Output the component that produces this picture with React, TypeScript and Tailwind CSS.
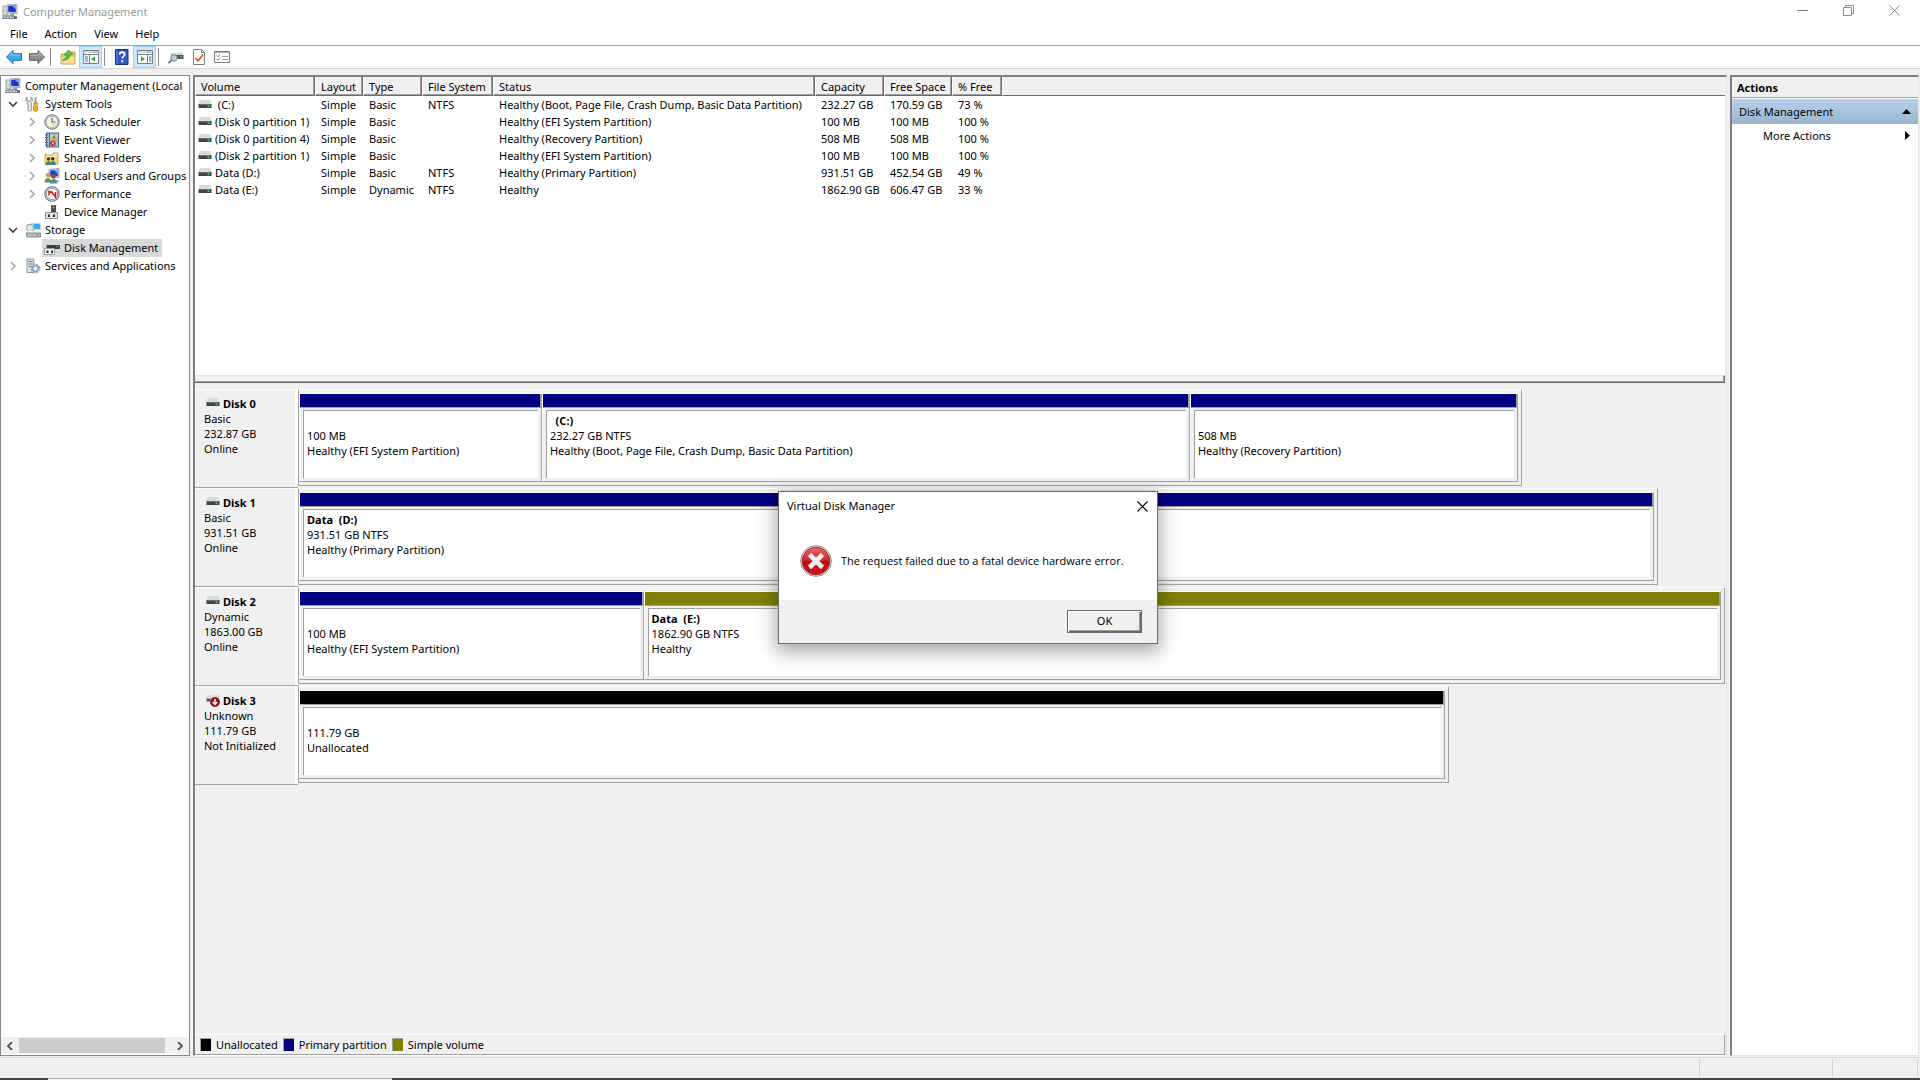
import type { ReactNode } from "react";

/* ---------- icons ---------- */

function Svg({ w = 16, h = 16, children }: { w?: number; h?: number; children: ReactNode }) {
  return (
    <svg width={w} height={h} viewBox={`0 0 ${w} ${h}`} className="shrink-0" aria-hidden="true">
      {children}
    </svg>
  );
}

const ComputerIcon = () => (
  <Svg>
    <rect x="1" y="2" width="5" height="9" fill="#d5dbe0" stroke="#8b969e" strokeWidth="0.8" />
    <path d="M5 .8 15 0v9.6L5 9z" fill="#c9d1da" stroke="#8d98a5" strokeWidth="0.7" />
    <path d="M6.2 2 13.8 1.3v7L6.2 7.8z" fill="#1f34c4" />
    <path d="M10 1.7l3.8-.4v4z" fill="#8fa9f2" />
    <path d="M8 9.5h4v2H8z" fill="#8b969e" />
    <path d="M1 11h11l3 4H0z" fill="#7f8c8f" />
    <path d="M2 12h9M1.5 13.5h11" stroke="#d4dcdc" strokeDasharray="2 1" />
    <path d="M12 12.500h3v2h-3z" fill="#4b5a60" />
  </Svg>
);

const ToolsIcon = () => (
  <Svg>
    <path d="M2 1v3l2 1.500L6 4V1c2 1 2.300 4 .3 5.500V14c0 1.500-3.300 1.500-3.300 0V6.500C.2 5 .3 2 2 1z" fill="#eceeef" stroke="#808488" strokeWidth="0.9" />
    <path d="M9.500 1h2v6h-2z" fill="#9a9da0" />
    <path d="M8.500 7h4v1.500l-.7 1 .7 1V14c0 1.800-4 1.800-4 0v-3.500l.7-1-.7-1z" fill="#f3b51e" stroke="#b87c0c" strokeWidth="0.7" />
  </Svg>
);

const ClockIcon = () => (
  <Svg>
    <circle cx="8" cy="8" r="7.300" fill="#c3c6c8" stroke="#74787b" strokeWidth="0.9" />
    <circle cx="8" cy="8" r="5.700" fill="#f8f5e6" stroke="#a7a9aa" strokeWidth="0.6" />
    <path d="M8 8h4.500A4.500 4.500 0 0 1 8 12.500z" fill="#f0dfa6" />
    <path d="M8 3.500V8h3.500" fill="none" stroke="#3a6ea8" strokeWidth="1.200" />
  </Svg>
);

const EventIcon = () => (
  <Svg>
    <rect x="2.500" y="1" width="12" height="14" fill="#a9c4e2" stroke="#44628c" />
    <path d="M5.500 1v14" stroke="#44628c" />
    <path d="M1 3h3M1 5.500h3M1 8h3M1 10.500h3M1 13h3" stroke="#55606e" />
    <path d="M6.500 4h7M6.500 7h7" stroke="#e8f0f9" />
    <path d="M10 2.500 13 8H7z" fill="#f8d422" stroke="#a88607" strokeWidth="0.6" />
    <path d="M10 4.500v2" stroke="#000" strokeWidth="0.9" />
    <circle cx="9" cy="11.300" r="2.900" fill="#d82a2a" />
    <path d="m7.900 10.200 2.200 2.200m0-2.200-2.200 2.200" stroke="#fff" strokeWidth="0.8" />
  </Svg>
);

const SharedIcon = () => (
  <Svg>
    <path d="M1 4 1 14h13V3H9.500L8 5H4L3 4z" fill="#f4d675" stroke="#c79a31" strokeWidth="0.8" />
    <path d="M9.500 4.500H13" stroke="#fff" />
    <path d="M3 6.500h10" stroke="#fdf0b8" />
    <circle cx="4.500" cy="9" r="1.700" fill="#4a3524" />
    <path d="M1.500 15c0-5 6-5 6 0z" fill="#4a8f42" />
    <circle cx="8.700" cy="8.700" r="1.700" fill="#3a2a20" />
    <path d="M6 15c0-5.500 6-5.500 6 0z" fill="#3d87a5" />
  </Svg>
);

const UsersIcon = () => (
  <Svg>
    <path d="M5 1.500 15 .5v9L5 9z" fill="#d6dce2" stroke="#8692a0" strokeWidth="0.8" />
    <path d="M6.200 2.600 13.800 1.800v6.500l-7.600-.4z" fill="#2440cf" />
    <path d="m10 2.200 3.800-.4v4z" fill="#92aaf3" />
    <circle cx="4" cy="7" r="2.300" fill="#c79b62" />
    <path d="M.5 14.500c0-6 7-6 7 0z" fill="#5b9a52" />
    <circle cx="9.500" cy="8.500" r="2.300" fill="#8f5a2c" />
    <path d="M6 15.500c0-6 7.500-6 7.500 0z" fill="#5689bd" />
    <path d="M12 13h3" stroke="#777" />
  </Svg>
);

const PerformanceIcon = () => (
  <Svg>
    <circle cx="8" cy="8" r="7.200" fill="#ececec" stroke="#6c6f72" strokeWidth="1.100" />
    <circle cx="8" cy="8" r="5.600" fill="#fff" stroke="#8d8f91" strokeWidth="0.9" />
    <path d="M5 9.500V5.500l2.500 1M7 5l4.500 6V6" fill="none" stroke="#d4141c" strokeWidth="1.500" />
  </Svg>
);

const DeviceIcon = () => (
  <Svg>
    <path d="m6 2 2-1h5l-1 1z" fill="#8a8f92" />
    <path d="M7 1.500h5v8H7z" fill="#4d5255" />
    <path d="M8.500 3.500h1.500" stroke="#54e06a" />
    <path d="M1.500 8.500h12v6h-12z" fill="#e4e5e6" stroke="#8d9092" />
    <path d="M4 10.500h2v2.500H4zM9 10.500h2v2.500H9z" fill="#2d2f31" />
  </Svg>
);

const StorageIcon = () => (
  <Svg>
    <path d="M2 3 9 1.500V9L2 8z" fill="#c7d9c6" stroke="#7e8f83" strokeWidth="0.8" />
    <circle cx="5" cy="6" r="3.500" fill="#dfe8ec" stroke="#93a1a9" strokeWidth="0.7" />
    <path d="M8 1.500h7.500v6H8z" fill="#37aede" stroke="#ccd5da" />
    <path d="m2 9 12-.5 1.500 2.500H1z" fill="#f1f2f2" />
    <path d="M1 11h14.500v4H2z" fill="#b9bdc0" stroke="#73787b" strokeWidth="0.8" />
    <path d="M11.500 13h2" stroke="#35b43f" strokeWidth="1.300" />
  </Svg>
);

const DiskMgmtIcon = () => (
  <Svg>
    <path d="M4 3.500h11l1 1.500H2.500z" fill="#d7d9da" />
    <path d="M2.500 5h13.500v4H2.500z" fill="#3c4144" />
    <path d="M12.500 6.500h2" stroke="#44d35b" />
    <path d="M.5 8.500h10v6H.5z" fill="#eff0f0" stroke="#9a9c9e" />
    <path d="M2.500 10.500h2V13h-2zM7 10.500h2V13H7z" fill="#303234" />
  </Svg>
);

const ServicesIcon = () => (
  <Svg>
    <path d="M2 1h7v13.500H2z" fill="#dbe1e5" stroke="#8b979f" />
    <path d="M3.500 3.500h4M3.500 6h4M3.500 8.500h4" stroke="#6d7f8c" />
    <circle cx="10.500" cy="10.500" r="3.600" fill="none" stroke="#8eaac2" strokeWidth="2.600" strokeDasharray="2 .8" />
    <circle cx="10.500" cy="10.500" r="3" fill="#c3d6e6" stroke="#7896b0" />
    <circle cx="10.500" cy="10.500" r="1.200" fill="#fff" />
  </Svg>
);

const DriveIcon = () => (
  <Svg w={14} h={9}>
    <path d="M1.500 0h11l1 4H.5z" fill="#d8dadc" />
    <path d="M.5 4h13v4H.5z" fill="#3f4447" />
    <path d="M.5 4h13v1H.5z" fill="#6c7174" />
    <path d="M9.500 6.200h2" stroke="#35e04c" strokeWidth="1.600" />
  </Svg>
);

const OfflineDriveIcon = () => (
  <Svg w={14} h={12}>
    <path d="M1 0h12v4H0z" fill="#dcdee0" />
    <path d="M.5 3.500h4v3h-4z" fill="#55595c" />
    <circle cx="9" cy="7" r="4.800" fill="#a3131b" />
    <circle cx="9" cy="7" r="4.200" fill="none" stroke="#7b0b11" strokeWidth="0.8" />
    <path d="M9 4v4.500M6.800 7 9 9.500 11.200 7" fill="none" stroke="#fff" strokeWidth="1.400" />
  </Svg>
);

const Arrow = ({ fill, stroke, flip }: { fill: string; stroke: string; flip?: boolean }) => (
  <Svg>
    <path
      d={flip ? "M15.500 8 9 1.500v3.200H.5v6.600H9v3.200z" : "M.5 8 7 1.500v3.200h8.500v6.600H7v3.200z"}
      fill={fill}
      stroke={stroke}
      strokeLinejoin="round"
    />
    <path d={flip ? "M1.500 6.200h8.500V4.200l3 3" : "M14.500 6.200H6V4.200l-3 3"} fill="none" stroke="#fff" strokeOpacity="0.45" />
  </Svg>
);

const UpFolderIcon = () => (
  <Svg>
    <path d="M1 5h6l1-2h7v12H1z" fill="#e9c867" stroke="#c09a3e" strokeWidth="0.9" />
    <path d="M1.500 8h13v6.500h-13z" fill="#f7de90" />
    <path d="M2 11c3-.5 4.500-2.500 4.500-5H4L8.500 1 13 5.500h-2.700C10 9.500 7 11.800 2 11z" fill="#5cbf48" stroke="#2f8a22" strokeWidth="0.6" />
  </Svg>
);

const PaneIcon = ({ right }: { right?: boolean }) => (
  <Svg>
    <path d="M.5 1.500h15v13H.5z" fill="#fff" stroke="#7b7f83" />
    <path d="M1 3h14" stroke="#b4b8bc" />
    <path d="M10.500 3h4" stroke="#6b6f73" strokeDasharray="1 1" />
    <path d="M.5 5.500h15" stroke="#7b7f83" />
    {right ? (
      <>
        <path d="M10.500 6v8" stroke="#7b7f83" />
        <path d="M12 8h2.500M12 10h2.500M12 12h2.500" stroke="#3a72b8" />
        <path d="m4 7.500 4 2.500-4 2.500z" fill="#32a32b" />
      </>
    ) : (
      <>
        <path d="M6.500 6v8" stroke="#7b7f83" />
        <path d="M2 8h3M2 10h3M2 12h3" stroke="#3a72b8" />
        <path d="m12 7.500-4 2.500 4 2.500z" fill="#32a32b" />
      </>
    )}
  </Svg>
);

const HelpIcon = () => (
  <Svg>
    <path d="M1.500.5H14v15H1.500z" fill="#3456c0" stroke="#1d3284" />
    <path d="M3 1v14" stroke="#6f8be0" />
    <path d="M5.700 5.500c0-3 5-3 5 0 0 2-2.400 1.800-2.400 4M8.300 11.300v1.900" fill="none" stroke="#fff" strokeWidth="1.800" />
  </Svg>
);

const RescanIcon = () => (
  <Svg>
    <path d="M3 4h11.500l1 2H2z" fill="#cfd3d6" />
    <path d="M3 6h12.500v4H3z" fill="#4b5154" />
    <path d="M12 8h2" stroke="#3ddb54" strokeWidth="1.300" />
    <circle cx="6" cy="9" r="3.200" fill="#b9d4e8" stroke="#77858f" />
    <path d="m3.700 11-3.200 3" stroke="#707a82" strokeWidth="1.800" />
  </Svg>
);

const CheckDocIcon = () => (
  <Svg>
    <path d="M2.500.5h8l3 3v12h-11z" fill="#fff" stroke="#7c7f82" />
    <path d="M10.500.5v3h3" fill="none" stroke="#7c7f82" />
    <path d="m4.500 9 2.500 3 5-6.500" fill="none" stroke="#e2501e" strokeWidth="1.700" />
  </Svg>
);

const ListIcon = () => (
  <Svg>
    <path d="M.5 2.500h15v11H.5z" fill="#fff" stroke="#7c7f82" />
    <path d="M1 3.500h14" stroke="#a8acb0" />
    <path d="m2.500 6.500 1.200 1.200L6 5.500M2.500 10l1.200 1.200L6 9" fill="none" stroke="#3f8fd0" />
    <path d="M8 7.500h6M8 10.500h6" stroke="#9fa3a6" />
  </Svg>
);

const ErrorIcon = () => (
  <Svg w={32} h={32}>
    <defs>
      <linearGradient id="err" x1="0" y1="0" x2="0" y2="1">
        <stop offset="0" stopColor="#e8696c" />
        <stop offset="0.5" stopColor="#cf2227" />
        <stop offset="0.52" stopColor="#b90d12" />
        <stop offset="1" stopColor="#cc1a1a" />
      </linearGradient>
    </defs>
    <circle cx="16" cy="16" r="15.400" fill="#fff" stroke="#8d8d8d" strokeWidth="1" />
    <circle cx="16" cy="16" r="13.900" fill="url(#err)" stroke="#8c1a1d" strokeWidth="0.8" />
    <path d="m9.500 9.500 13 13m0-13-13 13" stroke="#f1efef" strokeWidth="4.600" />
  </Svg>
);

const Chevron = ({ open }: { open?: boolean }) => (
  <Svg w={10} h={10}>
    {open ? (
      <path d="m1 3 4 4 4-4" fill="none" stroke="#404040" strokeWidth="1.600" />
    ) : (
      <path d="m3 1 4 4-4 4" fill="none" stroke="#a6a6a6" strokeWidth="1.600" />
    )}
  </Svg>
);

/* ---------- data ---------- */

type Node = { label: string; icon: ReactNode; level: 0 | 1 | 2; open?: boolean; leaf?: boolean; selected?: boolean };

const tree: Node[] = [
  { label: "Computer Management (Local", icon: <ComputerIcon />, level: 0, leaf: true },
  { label: "System Tools", icon: <ToolsIcon />, level: 1, open: true },
  { label: "Task Scheduler", icon: <ClockIcon />, level: 2 },
  { label: "Event Viewer", icon: <EventIcon />, level: 2 },
  { label: "Shared Folders", icon: <SharedIcon />, level: 2 },
  { label: "Local Users and Groups", icon: <UsersIcon />, level: 2 },
  { label: "Performance", icon: <PerformanceIcon />, level: 2 },
  { label: "Device Manager", icon: <DeviceIcon />, level: 2, leaf: true },
  { label: "Storage", icon: <StorageIcon />, level: 1, open: true },
  { label: "Disk Management", icon: <DiskMgmtIcon />, level: 2, leaf: true, selected: true },
  { label: "Services and Applications", icon: <ServicesIcon />, level: 1 },
];

const columns = ["Volume", "Layout", "Type", "File System", "Status", "Capacity", "Free Space", "% Free"];

const volumes = [
  ["\u00a0(C:)", "Simple", "Basic", "NTFS", "Healthy (Boot, Page File, Crash Dump, Basic Data Partition)", "232.27 GB", "170.59 GB", "73 %"],
  ["(Disk 0 partition 1)", "Simple", "Basic", "", "Healthy (EFI System Partition)", "100 MB", "100 MB", "100 %"],
  ["(Disk 0 partition 4)", "Simple", "Basic", "", "Healthy (Recovery Partition)", "508 MB", "508 MB", "100 %"],
  ["(Disk 2 partition 1)", "Simple", "Basic", "", "Healthy (EFI System Partition)", "100 MB", "100 MB", "100 %"],
  ["Data (D:)", "Simple", "Basic", "NTFS", "Healthy (Primary Partition)", "931.51 GB", "452.54 GB", "49 %"],
  ["Data (E:)", "Simple", "Dynamic", "NTFS", "Healthy", "1862.90 GB", "606.47 GB", "33 %"],
];

type Part = { share: number; kind: "primary" | "simple" | "free"; name: string; size: string; state: string };
type Disk = { name: string; type: string; size: string; state: string; share: number; offline?: boolean; parts: Part[] };

const disks: Disk[] = [
  {
    name: "Disk 0", type: "Basic", size: "232.87 GB", state: "Online", share: 85.8,
    parts: [
      { share: 242, kind: "primary", name: "", size: "100 MB", state: "Healthy (EFI System Partition)" },
      { share: 649, kind: "primary", name: "\u00a0\u00a0(C:)", size: "232.27 GB NTFS", state: "Healthy (Boot, Page File, Crash Dump, Basic Data Partition)" },
      { share: 328, kind: "primary", name: "", size: "508 MB", state: "Healthy (Recovery Partition)" },
    ],
  },
  {
    name: "Disk 1", type: "Basic", size: "931.51 GB", state: "Online", share: 95.3,
    parts: [{ share: 1, kind: "primary", name: "Data\u00a0\u00a0(D:)", size: "931.51 GB NTFS", state: "Healthy (Primary Partition)" }],
  },
  {
    name: "Disk 2", type: "Dynamic", size: "1863.00 GB", state: "Online", share: 100,
    parts: [
      { share: 344, kind: "primary", name: "", size: "100 MB", state: "Healthy (EFI System Partition)" },
      { share: 1080, kind: "simple", name: "Data\u00a0\u00a0(E:)", size: "1862.90 GB NTFS", state: "Healthy" },
    ],
  },
  {
    name: "Disk 3", type: "Unknown", size: "111.79 GB", state: "Not Initialized", share: 80.66, offline: true,
    parts: [{ share: 1, kind: "free", name: "", size: "111.79 GB", state: "Unallocated" }],
  },
];

const fills = { primary: "bg-[#000080]", simple: "bg-[#808000]", free: "bg-black" };
const indents = ["pl-[2px]", "pl-[3px]", "pl-[22px]"];

/* ---------- parts ---------- */

function ToolButton({ label, on, children }: { label: string; on?: boolean; children: ReactNode }) {
  return (
    <button
      type="button"
      aria-label={label}
      className={`flex h-[22px] w-[23px] items-center justify-center border ${on ? "border-[#99d1ff] bg-[#cce8ff]" : "border-transparent"}`}
    >
      {children}
    </button>
  );
}

const Divider = () => <span className="ml-[2px] mr-[5px] h-[18px] w-px bg-[#8a8a8a]" />;

function TreeRow({ node }: { node: Node }) {
  return (
    <li className={`flex h-[18px] items-center whitespace-nowrap ${indents[node.level]}`}>
      {node.level > 0 && (
        <span className="mr-[2px] flex w-[17px] shrink-0 justify-center">{!node.leaf && <Chevron open={node.open} />}</span>
      )}
      <button
        type="button"
        className={`flex h-[18px] items-center gap-1 pl-[2px] pr-1 ${node.selected ? "bg-[#d9d9d9]" : ""}`}
      >
        {node.icon}
        {node.label}
      </button>
    </li>
  );
}

function Partition({ part }: { part: Part }) {
  return (
    <div
      className="flex min-w-0 basis-0 flex-col border border-b-[#a0a0a0] border-l-white border-r-[#a0a0a0] border-t-white"
      style={{ flexGrow: part.share }}
    >
      <div className={`h-[13px] border-r border-[#a0a0a0] ${fills[part.kind]}`} />
      <div className="h-px bg-[#a0a0a0]" />
      <div className="mx-[3px] mb-[3px] mt-[2px] flex-1 overflow-hidden whitespace-nowrap border-l border-t border-[#a0a0a0] bg-white px-[3px] pt-[2px] leading-[15px]">
        <div className="h-[15px] font-bold">{part.name}</div>
        <div>{part.size}</div>
        <div>{part.state}</div>
      </div>
    </div>
  );
}

function DiskRow({ disk }: { disk: Disk }) {
  return (
    <section className="flex h-[99px]" aria-label={disk.name}>
      <div className="w-[103px] shrink-0 border-b border-t border-b-[#a0a0a0] border-t-white pl-[9px] pt-[6px] leading-[15px] shadow-[inset_-3px_0_0_#ffffff]">
        <div className="flex h-[15px] items-center gap-[3px] font-bold">
          <span className="ml-[2px] flex h-3 items-start">{disk.offline ? <OfflineDriveIcon /> : <DriveIcon />}</span>
          {disk.name}
        </div>
        <div>{disk.type}</div>
        <div>{disk.size}</div>
        <div>{disk.state}</div>
      </div>
      <div className="min-w-0 flex-1">
        <div
          className="flex h-[97px] border border-b-[#a0a0a0] border-l-[#a0a0a0] border-r-[#a0a0a0] border-t-white pb-[3px] pr-[3px] pt-[3px]"
          style={{ width: `${disk.share}%` }}
        >
          {disk.parts.map((p, i) => (
            <Partition key={i} part={p} />
          ))}
        </div>
      </div>
    </section>
  );
}

function VolumeTable() {
  return (
    <table className="w-full table-fixed border-separate border-spacing-0 text-left">
      <colgroup>
        <col className="w-[120px]" />
        <col className="w-[48px]" />
        <col className="w-[59px]" />
        <col className="w-[71px]" />
        <col className="w-[322px]" />
        <col className="w-[69px]" />
        <col className="w-[68px]" />
        <col className="w-[50px]" />
        <col />
      </colgroup>
      <thead>
        <tr className="h-[19px] bg-[#f0f0f0]">
          {columns.map((c) => (
            <th
              key={c}
              scope="col"
              className="whitespace-nowrap border-b border-l border-r border-b-[#696969] border-l-white border-r-[#696969] pl-[5px] pt-[2px] font-normal leading-4 shadow-[inset_-1px_-1px_0_#a0a0a0]"
            >
              {c}
            </th>
          ))}
          <td className="border-b border-l border-b-[#696969] border-l-white" />
        </tr>
      </thead>
      <tbody>
        {volumes.map((row) => (
          <tr key={row[0]} className="h-[17px]">
            {row.map((cell, i) => (
              <td key={i} className={`whitespace-nowrap leading-[17px] ${i === 0 ? "pl-[3px]" : "pl-[6px]"}`}>
                {i === 0 ? (
                  <span className="flex items-center gap-[3px]">
                    <DriveIcon />
                    {cell}
                  </span>
                ) : (
                  cell
                )}
              </td>
            ))}
            <td />
          </tr>
        ))}
      </tbody>
    </table>
  );
}

function Legend() {
  const items = [
    { label: "Unallocated", fill: "bg-black" },
    { label: "Primary partition", fill: "bg-[#000080]" },
    { label: "Simple volume", fill: "bg-[#808000]" },
  ];
  return (
    <div className="flex h-[21px] items-center gap-[5px] border-b border-r border-t border-b-[#a0a0a0] border-r-[#a0a0a0] border-t-white pl-[5px]">
      {items.map((i) => (
        <span key={i.label} className="flex items-center gap-[5px]">
          <span className={`h-[13px] w-[11px] border-l border-t border-[#a0a0a0] ${i.fill}`} />
          {i.label}
        </span>
      ))}
    </div>
  );
}

function ErrorDialog() {
  return (
    <div
      role="alertdialog"
      aria-labelledby="dlg-title"
      aria-describedby="dlg-text"
      className="absolute left-[778px] top-[491px] w-[380px] border border-[#6b6b6b] bg-white shadow-[0_6px_18px_2px_rgba(0,0,0,0.35)]"
    >
      <div className="flex h-[28px] items-center justify-between pl-2 pr-[9px]">
        <h2 id="dlg-title">Virtual Disk Manager</h2>
        <button type="button" aria-label="Close dialog">
          <Svg w={11} h={11}>
            <path d="m.5.5 10 10m0-10-10 10" stroke="#000" strokeWidth="1.100" />
          </Svg>
        </button>
      </div>
      <div className="flex h-[80px] items-center gap-[9px] pl-[21px] pt-[2px]">
        <ErrorIcon />
        <p id="dlg-text" className="whitespace-nowrap font-['Open_Sans',sans-serif]">
          The request failed due to a fatal device hardware error.
        </p>
      </div>
      <div className="flex h-[43px] items-center justify-end bg-[#f0f0f0] pr-[15px]">
        <button
          type="button"
          className="h-[23px] w-[75px] border border-[#696969] bg-[#f0f0f0] pb-[2px] shadow-[inset_1px_1px_0_#ffffff,inset_-1px_-1px_0_#696969,inset_-2px_-2px_0_#a0a0a0]"
        >
          OK
        </button>
      </div>
    </div>
  );
}

export default function App() {
  return (
    <div className="relative flex min-h-screen flex-col bg-[#f0f0f0] font-['Noto_Sans',sans-serif] text-[11px] leading-4 text-black">
      <header className="bg-white">
        <div className="flex h-[23px] items-center justify-between pl-[2px] pr-[20px] text-[#999999]">
          <h1 className="flex items-center gap-[5px]">
            <ComputerIcon />
            Computer Management
          </h1>
          <div className="flex gap-[35px] pb-[3px]">
            <button type="button" aria-label="Minimize">
              <Svg w={11} h={11}>
                <path d="M0 5.500h11" stroke="#8a8a8a" />
              </Svg>
            </button>
            <button type="button" aria-label="Restore">
              <Svg w={11} h={11}>
                <path d="M.5 2.500h8v8h-8zM2.500 2.500v-2h8v8h-2" fill="none" stroke="#8a8a8a" />
              </Svg>
            </button>
            <button type="button" aria-label="Close">
              <Svg w={11} h={11}>
                <path d="m.5.5 10 10m0-10-10 10" stroke="#8a8a8a" />
              </Svg>
            </button>
          </div>
        </div>
        <nav className="flex h-[22px] items-center gap-[17px] pl-[10px]" aria-label="Menu">
          {["File", "Action", "View", "Help"].map((m) => (
            <button key={m} type="button">
              {m}
            </button>
          ))}
        </nav>
        <div className="flex h-6 items-end border-b border-t border-b-[#d9d9d9] border-t-[#a0a0a0]">
          <div className="flex items-center pl-[2px]">
            <ToolButton label="Back">
              <Arrow fill="#3fa9e8" stroke="#1a6fb4" />
            </ToolButton>
            <ToolButton label="Forward">
              <Arrow fill="#8d8d8d" stroke="#5c5c5c" flip />
            </ToolButton>
            <Divider />
            <ToolButton label="Up one level">
              <UpFolderIcon />
            </ToolButton>
            <ToolButton label="Show console tree" on>
              <PaneIcon />
            </ToolButton>
            <Divider />
            <ToolButton label="Help">
              <HelpIcon />
            </ToolButton>
            <ToolButton label="Show action pane" on>
              <PaneIcon right />
            </ToolButton>
            <Divider />
            <ToolButton label="Rescan disks">
              <RescanIcon />
            </ToolButton>
            <ToolButton label="Properties">
              <CheckDocIcon />
            </ToolButton>
            <ToolButton label="Options">
              <ListIcon />
            </ToolButton>
          </div>
        </div>
      </header>

      <main className="flex flex-1 gap-[3px] pt-[6px]">
        <aside className="flex w-[190px] shrink-0 flex-col border border-[#828790] bg-white pt-[1px]">
          <ul className="flex-1 overflow-hidden">
            {tree.map((n) => (
              <TreeRow key={n.label} node={n} />
            ))}
          </ul>
          <div className="mb-[1px] flex h-[17px] items-center bg-[#f0f0f0]">
            <button type="button" aria-label="Scroll left" className="flex w-[18px] justify-center">
              <Svg w={8} h={8}>
                <path d="M6 0 2 4l4 4" fill="none" stroke="#505050" strokeWidth="1.800" />
              </Svg>
            </button>
            <span className="h-[15px] flex-1 bg-[#cdcdcd]" />
            <span className="w-[5px]" />
            <button type="button" aria-label="Scroll right" className="flex w-[19px] justify-center">
              <Svg w={8} h={8}>
                <path d="m2 0 4 4-4 4" fill="none" stroke="#505050" strokeWidth="1.800" />
              </Svg>
            </button>
          </div>
        </aside>

        <div className="flex min-w-0 flex-1 flex-col border-b border-l-2 border-r border-t-2 border-b-white border-l-[#808080] border-r-[#e3e3e3] border-t-[#808080] pr-px">
          <div className="h-[298px] overflow-hidden bg-white">
            <VolumeTable />
          </div>
          <div className="h-[8px] border-b border-r border-t border-b-[#696969] border-r-[#696969] border-t-[#e3e3e3] shadow-[inset_-1px_-1px_0_#a0a0a0]" />
          <div className="flex-1 pt-[6px]">
            {disks.map((d) => (
              <DiskRow key={d.name} disk={d} />
            ))}
          </div>
          <Legend />
        </div>

        <aside className="mr-[1px] w-[189px] shrink-0 border-b border-l-2 border-r border-t-2 border-b-[#e3e3e3] border-l-[#808080] border-r-[#e3e3e3] border-t-[#808080] bg-white">
          <h2 className="flex h-[21px] items-center border-b border-[#a0a0a0] bg-[#f0f0f0] pl-[5px] pt-[2px] font-bold">Actions</h2>
          <button
            type="button"
            className="mt-[1px] flex h-[25px] w-full items-center justify-between bg-gradient-to-b from-[#b9d1ea] to-[#99b4d1] pl-[7px] pr-[7px]"
          >
            Disk Management
            <Svg w={9} h={5}>
              <path d="M0 5 4.500 0 9 5z" fill="#000" />
            </Svg>
          </button>
          <button type="button" className="flex h-[23px] w-full items-center justify-between pl-[31px] pr-[8px]">
            More Actions
            <Svg w={5} h={9}>
              <path d="M0 0 5 4.500 0 9z" fill="#000" />
            </Svg>
          </button>
        </aside>
      </main>

      <footer>
        <div className="mt-[1px] flex h-[21px] justify-end border-t border-[#d9d9d9] py-px">
          <span className="w-[133px] border-l border-[#d0d0d0]" />
          <span className="w-[86px] border-l border-r border-[#d0d0d0]" />
          <span className="w-[2px]" />
        </div>
        <div className="flex h-[2px] bg-[#454548]">
          <span className="ml-12 w-[344px] border-t border-[#b8b8b8] bg-[#f0f0f0]" />
        </div>
      </footer>

      <ErrorDialog />
    </div>
  );
}
